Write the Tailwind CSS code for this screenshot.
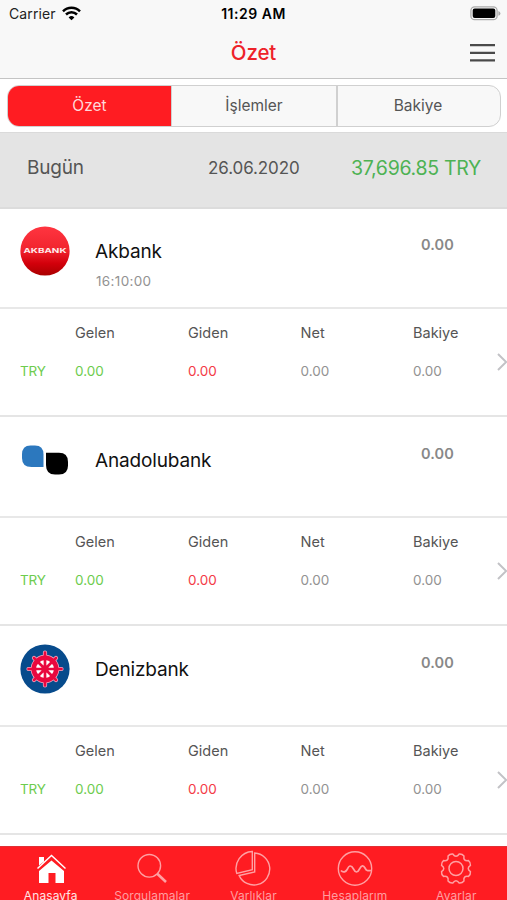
<!DOCTYPE html>
<html lang="tr">
<head>
<meta charset="utf-8">
<title>Özet</title>
<script src="https://cdn.jsdelivr.net/npm/@tailwindcss/browser@4"></script>
</head>
<body class="bg-white font-['Inter',sans-serif]">
<div class="flex h-[900px] w-[507px] flex-col overflow-hidden bg-white whitespace-nowrap">
  <header class="h-[79px] shrink-0 border-b border-[#c4c4c4] bg-[#f8f8f8]">
    <div class="grid h-7 grid-cols-3 items-center pr-[6px] pl-[9px] text-[14px] leading-7 text-[#222]">
      <div class="flex items-center gap-[6px]">
        <span class="tracking-[0.1px]">Carrier</span>
        <svg class="-mt-[2px]" width="19" height="15" viewBox="0 0 19 15" fill="none" stroke="#000" stroke-width="2.5"><path d="M1 5.300a12 12 0 0 1 17 0M4 8.500a7.800 7.800 0 0 1 11 0"/><path d="M9.500 14.300 6.600 11.400a4.200 4.200 0 0 1 5.800 0z" fill="#000" stroke="none"/></svg>
      </div>
      <span class="-ml-[3px] text-center font-semibold tracking-[0.5px] text-black">11:29 AM</span>
      <svg class="-mt-[2px] justify-self-end" width="31" height="15" viewBox="0 0 31 15"><rect x=".9" y=".9" width="26.200" height="12.800" rx="3.800" fill="#f8f8f8" stroke="#aaa" stroke-width="1.300"/><rect x="2.700" y="2.500" width="22.600" height="9.600" rx="2" fill="#000"/><path d="M28.400 5v4.800q2-.8 2-2.400t-2-2.400z" fill="#aaa"/></svg>
    </div>
    <div class="grid h-[49px] grid-cols-3 items-center pr-[12px] pl-[12px]">
      <span></span>
      <h1 class="pt-px text-center text-[20.5px] font-medium tracking-[-0.1px] text-[#ee2229]">Özet</h1>
      <svg class="justify-self-end" width="25" height="20" viewBox="0 0 25 20" stroke="#4a4a4a" stroke-width="2.200"><path d="M0 2.200h25M0 9.800h25M0 17.300h25"/></svg>
    </div>
  </header>

  <nav class="h-[53px] shrink-0 px-[7px] pt-[6px]">
    <div class="grid h-[42px] w-[494px] grid-cols-[163px_165px_164px] overflow-hidden rounded-[12px] border border-[#d0d0d0] bg-[#f8f8f8] text-center text-[15.5px] leading-[40px] text-[#555]">
      <span class="bg-[#ff1c22] text-[#ffd9da]">Özet</span>
      <span class="border-l border-[#d0d0d0]">İşlemler</span>
      <span class="border-l-2 border-[#d0d0d0] pr-[2px]">Bakiye</span>
    </div>
  </nav>

  <section class="flex h-[77px] shrink-0 items-center border-t border-b-2 border-t-[#dadada] border-b-[#dcdcdc] bg-[#e4e4e4] pb-[3px] pl-[27px] text-[#555]">
    <span class="w-[181px] text-[19px] tracking-[-0.2px]">Bugün</span>
    <span class="w-[143px] pt-px text-[17px] tracking-[-0.1px]">26.06.2020</span>
    <span class="text-[19.5px] tracking-[-0.3px] text-[#4db253]">37,696.85 TRY</span>
  </section>

  <main class="h-[637px] shrink-0">
    <article class="h-[209px]">
      <div class="flex h-[100px] border-b-2 border-[#e8e8e8] pl-5">
        <svg class="mt-[17px] h-[50px] w-[50px]" viewBox="0 0 50 50"><defs><linearGradient id="ak" x2="0" y2="1"><stop stop-color="#ff3540"/><stop offset=".48" stop-color="#f1242e"/><stop offset=".75" stop-color="#d3000b"/><stop offset="1" stop-color="#a90000"/></linearGradient></defs><circle cx="25" cy="25" r="24.600" fill="url(#ak)"/><text x="3.500" y="27.200" textLength="43" lengthAdjust="spacingAndGlyphs" font-family="Inter" font-weight="700" font-size="6.800" fill="#ffecec">AKBANK</text></svg>
        <div class="w-[345px] pt-[28px] pl-[25px]">
          <h2 class="text-[19px] leading-[29px] tracking-[-0.15px] text-[#111]">Akbank</h2>
          <p class="mt-px pl-px text-[13.5px] leading-[28px] tracking-[0.35px] text-[#929292]">16:10:00</p>
        </div>
        <span class="pt-[26px] pl-[6px] text-[14.5px] leading-5 font-semibold tracking-[0.1px] text-[#888]">0.00</span>
      </div>
      <div class="flex h-[108px] items-start border-b-2 border-[#e5e5e5] pl-5">
        <div class="grid w-[476px] shrink-0 grid-cols-[55px_113px_112.5px_112.5px_83px] pt-[14px] text-[14.5px] leading-5 text-[#555]">
          <span></span><span>Gelen</span><span>Giden</span><span>Net</span><span>Bakiye</span>
          <span class="mt-[18px] text-[13.5px] tracking-[-0.2px] text-[#6dcc4e]">TRY</span><span class="mt-[18px] text-[13.5px] text-[#6dcc4e]">0.00</span><span class="mt-[18px] text-[13.5px] text-[#f43a46]">0.00</span><span class="mt-[18px] text-[13.5px] text-[#929292]">0.00</span><span class="mt-[18px] text-[13.5px] text-[#929292]">0.00</span>
        </div>
        <svg class="mt-[43px] shrink-0" width="13" height="20" viewBox="0 0 13 20" fill="none" stroke="#c2c2c6" stroke-width="2"><path d="m2 2 8.200 8L2 18"/></svg>
      </div>
    </article>
    <article class="h-[209px]">
      <div class="flex h-[100px] border-b-2 border-[#e8e8e8] pl-5">
        <svg class="mt-[17px] h-[50px] w-[50px]" viewBox="0 0 50 50"><path d="M10.500 10.500h4.500q8.500 0 8.500 9v12.500H11.500Q2 32 2 23v-3.500Q2 10.500 10.500 10.500z" fill="#2c78be"/><path d="M26 17.800h13Q48 17.800 48 27v3.500Q48 39.500 39 39.500h-4Q26 39.500 26 30z" fill="#000"/></svg>
        <div class="w-[345px] pt-[28px] pl-[25px]">
          <h2 class="text-[19px] leading-[29px] tracking-[-0.15px] text-[#111]">Anadolubank</h2>
        </div>
        <span class="pt-[26px] pl-[6px] text-[14.5px] leading-5 font-semibold tracking-[0.1px] text-[#888]">0.00</span>
      </div>
      <div class="flex h-[108px] items-start border-b-2 border-[#e5e5e5] pl-5">
        <div class="grid w-[476px] shrink-0 grid-cols-[55px_113px_112.5px_112.5px_83px] pt-[14px] text-[14.5px] leading-5 text-[#555]">
          <span></span><span>Gelen</span><span>Giden</span><span>Net</span><span>Bakiye</span>
          <span class="mt-[18px] text-[13.5px] tracking-[-0.2px] text-[#6dcc4e]">TRY</span><span class="mt-[18px] text-[13.5px] text-[#6dcc4e]">0.00</span><span class="mt-[18px] text-[13.5px] text-[#f43a46]">0.00</span><span class="mt-[18px] text-[13.5px] text-[#929292]">0.00</span><span class="mt-[18px] text-[13.5px] text-[#929292]">0.00</span>
        </div>
        <svg class="mt-[43px] shrink-0" width="13" height="20" viewBox="0 0 13 20" fill="none" stroke="#c2c2c6" stroke-width="2"><path d="m2 2 8.200 8L2 18"/></svg>
      </div>
    </article>
    <article class="h-[209px]">
      <div class="flex h-[100px] border-b-2 border-[#e8e8e8] pl-5">
        <svg class="mt-[17px] h-[50px] w-[50px]" viewBox="0 0 50 50"><circle cx="25" cy="25" r="24.600" fill="#074b8c"/><g fill="none" stroke="#f5a9c3" stroke-width="4.200" stroke-linecap="round"><circle cx="25" cy="25" r="11.500" stroke-width="5.500"/><path d="M25 8.500v33M8.500 25h33M14 14l22 22M36 14 14 36"/></g><circle cx="25" cy="25" r="10" fill="#fff"/><g fill="none" stroke="#e9083f" stroke-width="2.700" stroke-linecap="round"><circle cx="25" cy="25" r="11.200" stroke-width="4.600"/><path d="M25 8.500v33M8.500 25h33M14 14l22 22M36 14 14 36"/></g><circle cx="25" cy="25" r="3.500" fill="#e9083f"/></svg>
        <div class="w-[345px] pt-[28px] pl-[25px]">
          <h2 class="text-[19px] leading-[29px] tracking-[-0.15px] text-[#111]">Denizbank</h2>
        </div>
        <span class="pt-[26px] pl-[6px] text-[14.5px] leading-5 font-semibold tracking-[0.1px] text-[#888]">0.00</span>
      </div>
      <div class="flex h-[108px] items-start border-b-2 border-[#e5e5e5] pl-5">
        <div class="grid w-[476px] shrink-0 grid-cols-[55px_113px_112.5px_112.5px_83px] pt-[14px] text-[14.5px] leading-5 text-[#555]">
          <span></span><span>Gelen</span><span>Giden</span><span>Net</span><span>Bakiye</span>
          <span class="mt-[18px] text-[13.5px] tracking-[-0.2px] text-[#6dcc4e]">TRY</span><span class="mt-[18px] text-[13.5px] text-[#6dcc4e]">0.00</span><span class="mt-[18px] text-[13.5px] text-[#f43a46]">0.00</span><span class="mt-[18px] text-[13.5px] text-[#929292]">0.00</span><span class="mt-[18px] text-[13.5px] text-[#929292]">0.00</span>
        </div>
        <svg class="mt-[43px] shrink-0" width="13" height="20" viewBox="0 0 13 20" fill="none" stroke="#c2c2c6" stroke-width="2"><path d="m2 2 8.200 8L2 18"/></svg>
      </div>
    </article>
  </main>

  <footer class="grid h-[54px] shrink-0 grid-cols-5 border-t border-[#e03035] bg-[#ff1c22] pt-[3px] text-center text-[12px] leading-[14px] text-[#ff9da0]">
    <div class="flex flex-col items-center gap-[3px]">
      <svg width="36" height="36" viewBox="0 0 36 36" fill="#fff"><path d="M6 15.500V7h5v4.500zM6 33V21L18.500 10.500 31 21v12h-8.500V23h-7v10z"/><path d="M4.500 18.500 18.500 5.500l14 13" fill="none" stroke="#fff" stroke-width="1.500"/></svg>
      <span class="tracking-[0.1px] text-[#ffe3e4]">Anasayfa</span>
    </div>
    <div class="flex flex-col items-center gap-[3px]">
      <svg width="36" height="36" viewBox="0 0 36 36" fill="none" stroke="#ffa0a3" stroke-width="1.400"><circle cx="15.300" cy="15.800" r="11.300"/><path d="m23.300 23.700 8.700 8.300" stroke-width="2.600"/></svg>
      <span class="tracking-[0.1px]">Sorgulamalar</span>
    </div>
    <div class="flex flex-col items-center gap-[3px]">
      <svg width="36" height="36" viewBox="0 0 36 36" fill="none" stroke="#ffa0a3" stroke-width="1.400"><path d="M17.300 1.500V19.800L1.800 23.500A17 17 0 0 1 17.300 1.500zM19.700 3V22L4.200 25.600A16 16 0 1 0 19.700 3z"/></svg>
      <span class="tracking-[0.1px]">Varlıklar</span>
    </div>
    <div class="flex flex-col items-center gap-[3px]">
      <svg width="36" height="36" viewBox="0 0 36 36" fill="none" stroke="#ffa0a3" stroke-width="1.400"><circle cx="18" cy="18.500" r="16.700"/><path d="M4 20.500c2 2.500 5 1.500 6.500-1.500 1.500-4 4-4 6 0s4 4 6 0 4-4 5.500-1 2.500 3 6 2.500" stroke-width="1.700"/></svg>
      <span class="tracking-[0.1px]">Hesaplarım</span>
    </div>
    <div class="flex flex-col items-center gap-[3px]">
      <svg width="36" height="36" viewBox="0 0 36 36" fill="none" stroke="#ffa0a3" stroke-width="1.500" stroke-linejoin="round"><circle cx="18" cy="18.500" r="7"/><path id="gear" d=""/></svg>
      <span class="tracking-[0.1px]">Ayarlar</span>
    </div>
  </footer>
</div>
<script>
  // Eight-toothed cog outline: rounded teeth joined by concave valleys
  const pt = (r, a) => (18 + r * Math.sin(a * Math.PI / 180)).toFixed(2) + ' ' + (18.5 - r * Math.cos(a * Math.PI / 180)).toFixed(2);
  let d = 'M' + pt(14.8, -12.5);
  for (let a = 0; a < 360; a += 45) {
    d += 'Q' + pt(10, a) + ' ' + pt(14.8, a + 12.5) + 'Q' + pt(16, a + 22.5) + ' ' + pt(14.8, a + 32.5);
  }
  document.getElementById('gear').setAttribute('d', d + 'Z');
</script>
</body>
</html>
